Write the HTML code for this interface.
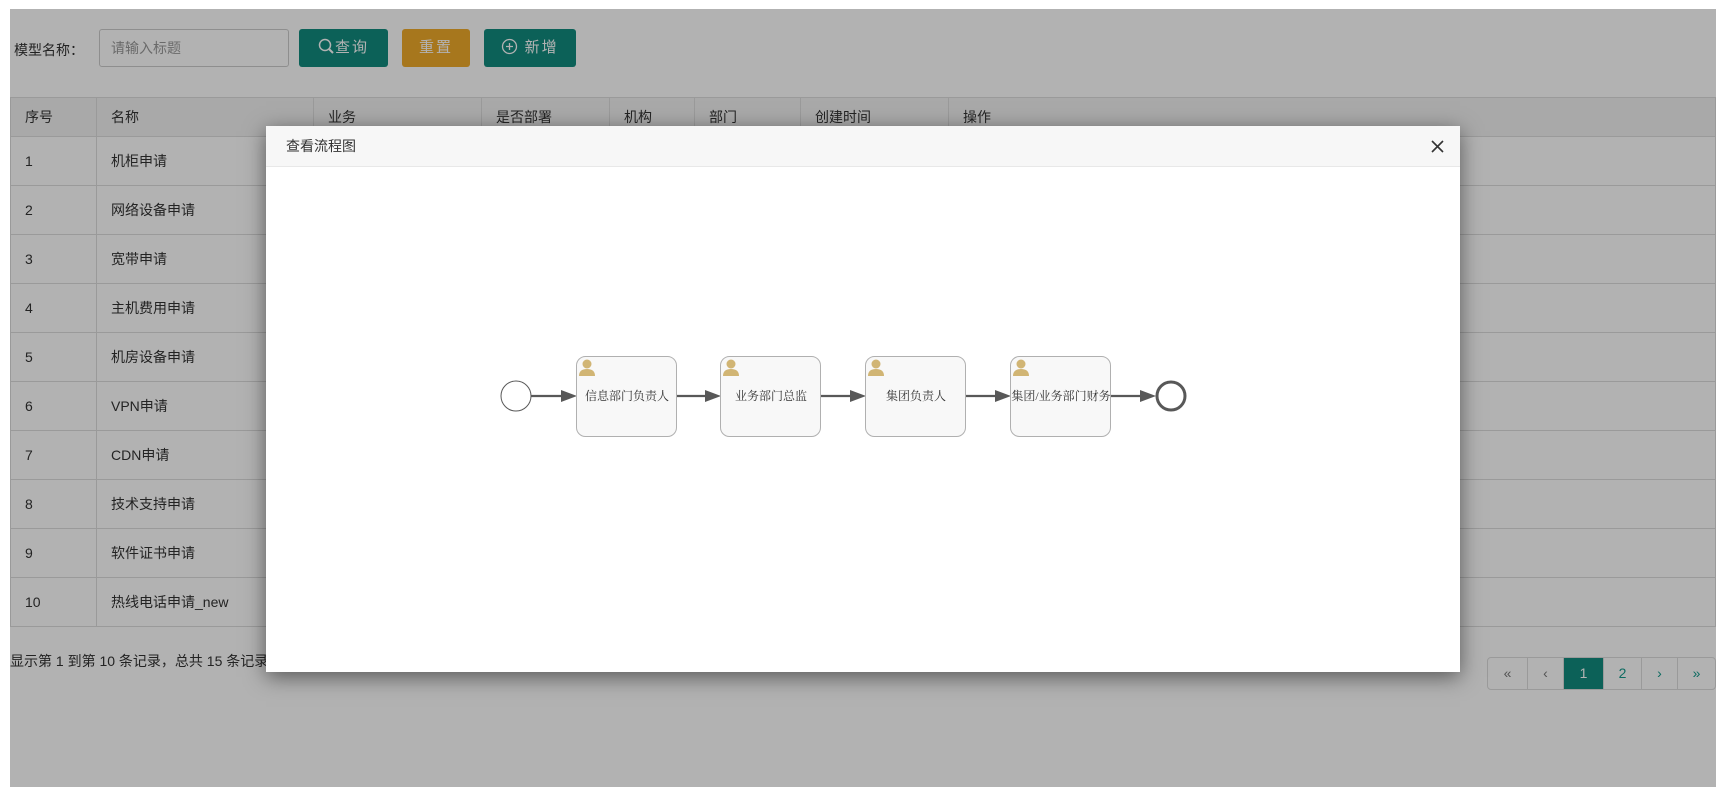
<!DOCTYPE html>
<html><head><meta charset="utf-8"><style>
*{box-sizing:border-box;margin:0;padding:0}
body{width:1717px;height:787px;overflow:hidden;background:#fff;font-family:"Liberation Sans","Noto Sans CJK SC",sans-serif;font-size:14px;color:#333;position:relative}
.page{position:absolute;left:10px;top:9px;width:1706px;height:778px;background:#fff}
.lbl{position:absolute;left:4px;top:31px;font-size:14px}
.inp{position:absolute;left:89px;top:20px;width:190px;height:38px;border:1px solid #ccc;border-radius:3px;padding-left:11px;line-height:36px;color:#999}
.btn{position:absolute;top:20px;height:38px;border-radius:3px;color:#fff;text-align:center;line-height:38px;font-size:15px;letter-spacing:2px}
table{position:absolute;left:0;top:88px;width:1706px;border-collapse:collapse}
td,th{border:1px solid #ddd;text-align:left;font-weight:normal;padding-left:14px;height:49px}
th{background:#f2f2f2;height:39px}
.foot{position:absolute;left:0;top:642px;font-size:14px}
.pg{position:absolute;left:1477px;top:648px;display:flex;border:1px solid #ddd;border-radius:4px;overflow:hidden;height:33px}
.pg div{border-left:1px solid #ddd;text-align:center;line-height:31px;color:#149a8c}
.pg div:first-child{border-left:none}
.ov{position:absolute;left:10px;top:9px;width:1706px;height:778px;background:rgba(0,0,0,.3)}
.modal{position:absolute;left:266px;top:126px;width:1194px;height:546px;background:#fff;box-shadow:0 5px 20px rgba(0,0,0,.5)}
.mh{height:41px;background:#f7f7f7;border-bottom:1px solid #e8e8e8;padding-left:20px;line-height:41px;font-size:14px}
</style></head><body>
<div class="page">
<div class="lbl">模型名称：</div>
<div class="inp">请输入标题</div>
<div class="btn" style="left:289px;width:89px;background:#128c7f">
<svg width="17" height="17" viewBox="0 0 17 17" style="vertical-align:-3px"><circle cx="7" cy="7" r="5.5" fill="none" stroke="#fff" stroke-width="1.5"/><path d="M11 11l4 4" stroke="#fff" stroke-width="2"/></svg>查询</div>
<div class="btn" style="left:392px;width:68px;background:#f0ab2a">重置</div>
<div class="btn" style="left:474px;width:92px;background:#128c7f">
<svg width="17" height="17" viewBox="0 0 17 17" style="vertical-align:-3px"><circle cx="8.5" cy="8.5" r="7" fill="none" stroke="#fff" stroke-width="1.3"/><path d="M8.5 5v7M5 8.5h7" stroke="#fff" stroke-width="1.3"/></svg> 新增</div>
<table>
<tr><th style="width:86px">序号</th><th style="width:217px">名称</th><th style="width:168px">业务</th><th style="width:128px">是否部署</th><th style="width:85px">机构</th><th style="width:106px">部门</th><th style="width:148px">创建时间</th><th>操作</th></tr>
<tr><td>1</td><td>机柜申请</td><td></td><td></td><td></td><td></td><td></td><td></td></tr>
<tr><td>2</td><td>网络设备申请</td><td></td><td></td><td></td><td></td><td></td><td></td></tr>
<tr><td>3</td><td>宽带申请</td><td></td><td></td><td></td><td></td><td></td><td></td></tr>
<tr><td>4</td><td>主机费用申请</td><td></td><td></td><td></td><td></td><td></td><td></td></tr>
<tr><td>5</td><td>机房设备申请</td><td></td><td></td><td></td><td></td><td></td><td></td></tr>
<tr><td>6</td><td>VPN申请</td><td></td><td></td><td></td><td></td><td></td><td></td></tr>
<tr><td>7</td><td>CDN申请</td><td></td><td></td><td></td><td></td><td></td><td></td></tr>
<tr><td>8</td><td>技术支持申请</td><td></td><td></td><td></td><td></td><td></td><td></td></tr>
<tr><td>9</td><td>软件证书申请</td><td></td><td></td><td></td><td></td><td></td><td></td></tr>
<tr><td>10</td><td>热线电话申请_new</td><td></td><td></td><td></td><td></td><td></td><td></td></tr>
</table>
<div class="foot">显示第 1 到第 10 条记录，总共 15 条记录</div>
<div class="pg"><div style="width:39px;color:#777">«</div><div style="width:36px;color:#777">‹</div><div style="width:40px;background:#128c7f;color:#fff">1</div><div style="width:38px">2</div><div style="width:36px">›</div><div style="width:38px">»</div></div>
</div>
<div class="ov"></div>
<div class="modal">
<div class="mh">查看流程图</div>
<svg style="position:absolute;right:16px;top:14px" width="13" height="13" viewBox="0 0 13 13"><path d="M1 1l11 11M12 1L1 12" stroke="#333" stroke-width="1.6"/></svg>
<svg style="position:absolute;left:0;top:0" width="1194" height="546" viewBox="266 126 1194 546" font-family="'Liberation Serif','Noto Serif CJK SC',serif" font-size="12">
<defs><g id="u"><circle cx="9" cy="5" r="4.5" fill="#d1b574"/><path d="M1 17q0-7 8-7t8 7z" fill="#d1b574"/></g></defs>
<g stroke="#585858" stroke-width="2.2" fill="none">
<path d="M531 396H565"/><path d="M677 396H709"/><path d="M821 396H855"/><path d="M966 396H1000"/><path d="M1111 396H1145"/>
</g>
<path d="M561 390l16 6l-16 6z M705 390l16 6l-16 6z M850 390l16 6l-16 6z M995 390l16 6l-16 6z M1140 390l16 6l-16 6z" fill="#585858"/>
<circle cx="516" cy="396" r="15" fill="#fff" stroke="#585858" stroke-width="1"/>
<circle cx="1171" cy="396" r="14" fill="#fff" stroke="#585858" stroke-width="3"/>
<g fill="#f8f8f8" stroke="#b0b0b0"><rect x="576.5" y="356.5" width="100" height="80" rx="9"/><rect x="720.5" y="356.5" width="100" height="80" rx="9"/><rect x="865.5" y="356.5" width="100" height="80" rx="9"/><rect x="1010.5" y="356.5" width="100" height="80" rx="9"/></g>
<use href="#u" x="578" y="359"/><use href="#u" x="722" y="359"/><use href="#u" x="867" y="359"/><use href="#u" x="1012" y="359"/>
<g fill="#333" text-anchor="middle"><text x="627" y="400">信息部门负责人</text><text x="771" y="400">业务部门总监</text><text x="916" y="400">集团负责人</text><text x="1061" y="400">集团/业务部门财务</text></g>
</svg>
</div>
</body></html>
